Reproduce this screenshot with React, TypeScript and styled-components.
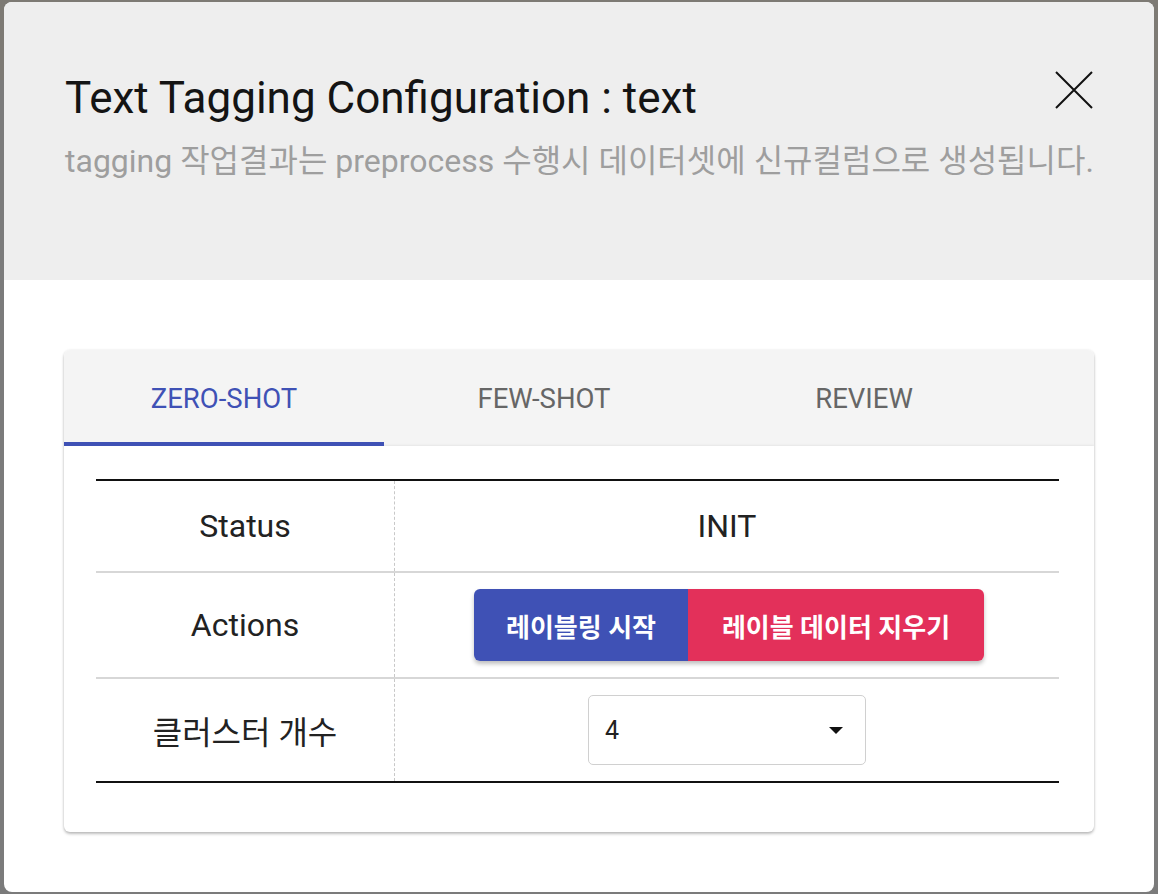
import styled, { createGlobalStyle } from 'styled-components';

const GlobalStyle = createGlobalStyle`
  html, body {
    margin: 0;
    padding: 0;
  }
  body {
    background: linear-gradient(#7d7a74 0, #7d7a74 80px, #7b7b7b 80px);
    font-family: Roboto, "Noto Sans CJK KR", sans-serif;
    min-height: 894px;
  }
`;

const Backdrop = styled.div`
  padding: 2px 4px;
`;

const Modal = styled.div`
  width: 1150px;
  height: 890px;
  background: #fff;
  border-radius: 8px;
  overflow: hidden;
  display: flex;
  flex-direction: column;
`;

const Header = styled.div`
  flex-shrink: 0;
  height: 278px;
  box-sizing: border-box;
  background: #eeeeee;
  padding: 70px 60px 0 61px;
  display: flex;
  flex-direction: column;
`;

const TitleRow = styled.div`
  display: flex;
  justify-content: space-between;
  align-items: flex-start;
`;

const Title = styled.h2`
  margin: 0;
  font-size: 44px;
  font-weight: 400;
  line-height: 52px;
  color: #141414;
`;

const Subtitle = styled.p`
  margin: 17px 0 0;
  font-size: 32px;
  line-height: 40px;
  color: #9e9e9e;
  white-space: nowrap;
`;

const CloseButton = styled.button`
  border: none;
  background: none;
  padding: 0;
  margin-top: -2px;
  width: 40px;
  height: 40px;
  cursor: pointer;
  display: flex;
  align-items: center;
  justify-content: center;
`;

const Body = styled.div`
  flex: 1;
  padding: 70px 60px 60px 60px;
`;

const Card = styled.div`
  border-radius: 6px;
  background: #fff;
  box-shadow: 0 2px 3px rgba(0, 0, 0, 0.25), 0 0 3px rgba(0, 0, 0, 0.08);
  overflow: hidden;
`;

const TabBar = styled.div`
  display: flex;
  background: #f4f4f4;
  height: 96px;
`;

const Tab = styled.button<{ $active?: boolean }>`
  width: 320px;
  border: none;
  background: none;
  font-family: Roboto, "Noto Sans CJK KR", sans-serif;
  font-size: 27.5px;
  font-weight: 400;
  color: ${(p) => (p.$active ? '#3f51b5' : '#666666')};
  border-bottom: 4px solid ${(p) => (p.$active ? '#3f51b5' : 'transparent')};
  border-top: 4px solid transparent;
  padding: 0;
  cursor: pointer;
`;

const Content = styled.div`
  padding: 33px 35px 49px 32px;
  box-shadow: 0 -1px 2px rgba(0, 0, 0, 0.06);
`;

const Table = styled.div`
  border-top: 2px solid #111;
  border-bottom: 2px solid #111;
`;

const Row = styled.div<{ $h: number; $last?: boolean }>`
  display: grid;
  grid-template-columns: 299px 1fr;
  height: ${(p) => p.$h}px;
  border-bottom: ${(p) => (p.$last ? 'none' : '2px solid #d7d7d7')};
`;

const Label = styled.div`
  display: flex;
  align-items: center;
  justify-content: center;
  font-size: 32px;
  color: #222;
  border-right: 1px dashed #c8c8c8;
`;

const Value = styled.div`
  display: flex;
  align-items: center;
  justify-content: center;
  font-size: 32px;
  color: #222;
`;

const ButtonGroup = styled.div`
  display: flex;
  margin-left: 4px;
  border-radius: 6px;
  overflow: hidden;
  box-shadow: 0 3px 4px rgba(0, 0, 0, 0.25);
`;

const ActionButton = styled.button<{ $color: string; $w: number }>`
  width: ${(p) => p.$w}px;
  height: 72px;
  border: none;
  background: ${(p) => p.$color};
  color: #fff;
  font-family: Roboto, "Noto Sans CJK KR", sans-serif;
  font-size: 26px;
  font-weight: 700;
  cursor: pointer;
`;

const Select = styled.div`
  width: 278px;
  height: 70px;
  box-sizing: border-box;
  border: 1px solid #d0d0d0;
  border-radius: 5px;
  display: flex;
  align-items: center;
  justify-content: space-between;
  padding: 0 22px 0 16px;
  font-size: 25px;
  color: #222;
`;

const Caret = styled.span`
  width: 0;
  height: 0;
  border-left: 7px solid transparent;
  border-right: 7px solid transparent;
  border-top: 7px solid #111;
`;

export default function App() {
  return (
    <>
      <GlobalStyle />
      <Backdrop>
        <Modal>
          <Header>
            <TitleRow>
              <Title>Text Tagging Configuration : text</Title>
              <CloseButton aria-label="close">
                <svg width="38" height="38" viewBox="0 0 38 38">
                  <path d="M1 1 L37 37 M37 1 L1 37" stroke="#111" strokeWidth="2" />
                </svg>
              </CloseButton>
            </TitleRow>
            <Subtitle>tagging 작업결과는 preprocess 수행시 데이터셋에 신규컬럼으로 생성됩니다.</Subtitle>
          </Header>
          <Body>
            <Card>
              <TabBar>
                <Tab $active>ZERO-SHOT</Tab>
                <Tab>FEW-SHOT</Tab>
                <Tab>REVIEW</Tab>
              </TabBar>
              <Content>
                <Table>
                  <Row $h={90}>
                    <Label>Status</Label>
                    <Value>INIT</Value>
                  </Row>
                  <Row $h={104}>
                    <Label>Actions</Label>
                    <Value>
                      <ButtonGroup>
                        <ActionButton $color="#3f51b5" $w={214}>레이블링 시작</ActionButton>
                        <ActionButton $color="#e3305a" $w={296}>레이블 데이터 지우기</ActionButton>
                      </ButtonGroup>
                    </Value>
                  </Row>
                  <Row $h={102} $last>
                    <Label>클러스터 개수</Label>
                    <Value>
                      <Select>
                        <span>4</span>
                        <Caret />
                      </Select>
                    </Value>
                  </Row>
                </Table>
              </Content>
            </Card>
          </Body>
        </Modal>
      </Backdrop>
    </>
  );
}
